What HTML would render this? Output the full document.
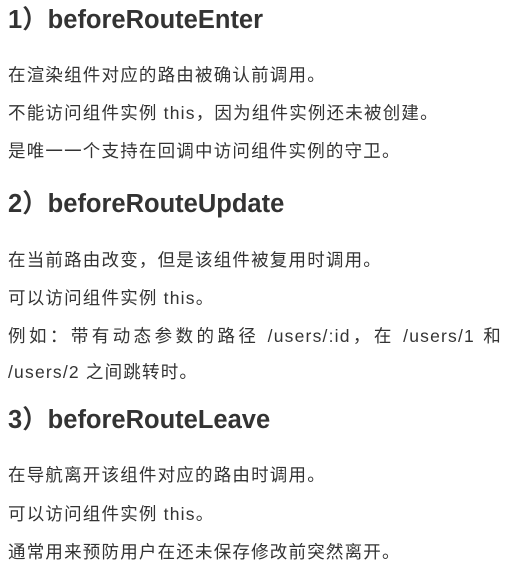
<!DOCTYPE html>
<html><head><meta charset="utf-8"><style>
html,body{margin:0;padding:0;background:#fff;width:511px;height:573px;overflow:hidden}
body{position:relative;color:#333;font-family:"Liberation Sans","Noto Sans CJK SC",sans-serif}
.h{position:absolute;left:8px;font-size:25.5px;line-height:30px;font-weight:bold;white-space:nowrap}
.p{position:absolute;left:8px;font-size:17.5px;letter-spacing:1.2px;line-height:24px;white-space:nowrap}
.j{width:494px;text-align:justify;text-align-last:justify;white-space:normal}
</style></head><body>
<div class="h" style="top:5px">1）beforeRouteEnter</div>
<div class="p" style="top:63px">在渲染组件对应的路由被确认前调用。</div>
<div class="p" style="top:101px">不能访问组件实例 this，因为组件实例还未被创建。</div>
<div class="p" style="top:139px">是唯一一个支持在回调中访问组件实例的守卫。</div>
<div class="h" style="top:189px">2）beforeRouteUpdate</div>
<div class="p" style="top:248px">在当前路由改变，但是该组件被复用时调用。</div>
<div class="p" style="top:286px">可以访问组件实例 this。</div>
<div class="p j" style="top:324px">例如：带有动态参数的路径 /users/:id，在 /users/1 和</div>
<div class="p" style="top:360px">/users/2 之间跳转时。</div>
<div class="h" style="top:405px">3）beforeRouteLeave</div>
<div class="p" style="top:463px">在导航离开该组件对应的路由时调用。</div>
<div class="p" style="top:502px">可以访问组件实例 this。</div>
<div class="p" style="top:540px">通常用来预防用户在还未保存修改前突然离开。</div>
</body></html>
